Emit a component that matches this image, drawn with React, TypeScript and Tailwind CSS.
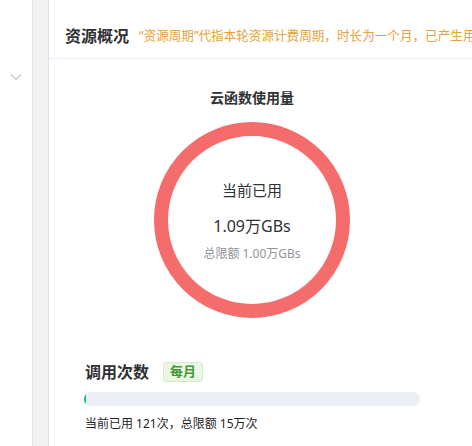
import React from "react";

const FONT = '"Noto Sans", "Noto Sans CJK SC", sans-serif';

function UsageRing() {
  const size = 196;
  const stroke = 14;
  const r = (size - stroke) / 2;
  return (
    <div className="relative w-[196px] h-[196px]">
      <svg width={size} height={size} viewBox={`0 0 ${size} ${size}`}>
        <circle cx={size / 2} cy={size / 2} r={r} fill="none" stroke="#f56c6c" strokeWidth={stroke} />
      </svg>
      <div className="absolute inset-0 flex flex-col items-center">
        <div className="mt-[58px] text-[15px] leading-[20px] text-[#303133]">当前已用</div>
        <div className="mt-[15px] text-[16px] leading-[22px] text-[#303133]">1.09万GBs</div>
        <div className="mt-[9px] text-[12px] leading-[16px] text-[#909399]">总限额 1.00万GBs</div>
      </div>
    </div>
  );
}

export default function App() {
  return (
    <div className="flex w-[472px] h-[446px] overflow-hidden bg-white" style={{ fontFamily: FONT }}>
      {/* collapsed nav column */}
      <div className="relative w-[32px] shrink-0">
        <svg className="absolute left-[10px] top-[73px]" width="12" height="8" viewBox="0 0 12 8">
          <polyline points="1,1.5 6,6.5 11,1.5" fill="none" stroke="#c0c4cc" strokeWidth="1.2" />
        </svg>
      </div>
      <div className="w-[17px] shrink-0 bg-[#f3f3f3] border-l border-l-[#e3e3e3] border-r border-r-[#d5e1f3]" />

      <div className="flex-1 min-w-0 flex flex-col">
        <div className="h-[59px] shrink-0 border-b border-[#ebeef5] flex items-center pt-[14px] pl-4 whitespace-nowrap overflow-hidden">
          <span className="text-[16px] font-bold text-[#303133] leading-[22px]">资源概况</span>
          <span className="ml-[10px] text-[12.6px] text-[#e6a23c] leading-[22px]">
            “资源周期”代指本轮资源计费周期，时长为一个月，已产生用量将在下一周期开始时清零
          </span>
        </div>

        <div className="pl-[35px]">
          <div className="w-[336px] flex flex-col">
            <div className="flex flex-col items-center">
              <div className="mt-[29px] text-[14px] leading-[20px] font-bold text-[#303133]">云函数使用量</div>
              <div className="mt-[14px]">
                <UsageRing />
              </div>
            </div>

            <div className="mt-[44px] flex items-center h-[20px]">
              <span className="ml-[1px] text-[16px] font-bold text-[#303133] leading-[20px]">调用次数</span>
              <span className="ml-[14px] h-[20px] px-[6px] flex items-center rounded-[3px] border border-[#d5edc8] bg-[#ebf6e4] text-[13px] font-bold text-[#3f9a35]">
                每月
              </span>
            </div>

            <div className="mt-[10px] h-[14px] rounded-full bg-[#ebeef5] overflow-hidden">
              <div className="h-full w-[2px] bg-[#1fb76f]" />
            </div>

            <div className="mt-[9px] ml-[1px] text-[12px] leading-[18px] text-[#1f2328]">
              当前已用 121次，总限额 15万次
            </div>
          </div>
        </div>
      </div>
    </div>
  );
}
